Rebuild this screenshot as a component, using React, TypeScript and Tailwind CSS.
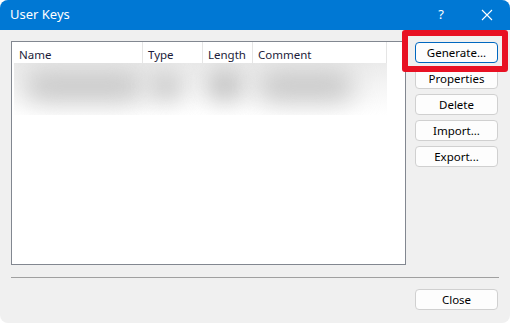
import React from "react";

const columns = [
  { label: "Name", width: 129 },
  { label: "Type", width: 60 },
  { label: "Length", width: 50 },
  { label: "Comment", width: 134 },
];

const buttons = ["Generate...", "Properties", "Delete", "Import...", "Export..."];

function DialogButton({ label, primary }: { label: string; primary?: boolean }) {
  return (
    <button
      className={
        "w-[83px] h-[21px] rounded-[4px] bg-[#fdfdfd] text-[11.5px] leading-none text-black border " +
        (primary ? "border-[#0067c0]" : "border-[#d0d0d0]")
      }
    >
      {label}
    </button>
  );
}

export default function App() {
  return (
    <div
      className="relative w-[510px] h-[323px] bg-white overflow-hidden"
      style={{ fontFamily: '"Noto Sans", "Liberation Sans", sans-serif' }}
    >
      <div className="flex flex-col w-full h-full rounded-[8px] overflow-hidden bg-[#f0f0f0]">
        {/* title bar */}
        <div className="h-[30px] bg-[#0078d4] flex items-center text-white shrink-0">
          <span className="pl-[10px] text-[13px]">User Keys</span>
          <span className="ml-auto mr-[37px] text-[13px]">?</span>
          <svg width="12" height="12" viewBox="0 0 12 12" className="mr-[17px]">
            <path d="M1 1 L11 11 M11 1 L1 11" stroke="white" strokeWidth="1.1" />
          </svg>
        </div>

        {/* body */}
        <div className="flex pt-[11px] pl-[11px]">
          <div className="w-[395px] h-[224px] border border-[#828790] bg-white">
            <div className="flex h-[21px] ml-[2px]">
              {columns.map((c) => (
                <div
                  key={c.label}
                  className="h-full border-r border-[#e5e5e5] text-[11.5px] leading-[16px] text-[#1c1c3a] flex items-end pl-[5px]"
                  style={{ width: c.width }}
                >
                  {c.label}
                </div>
              ))}
            </div>
            {/* blurred row */}
            <div className="relative ml-[2px] w-[373px] h-[52px] bg-gradient-to-b from-[#ebebeb] via-[#f6f6f6] to-white overflow-hidden">
              <div className="absolute left-[10px] top-[8px] w-[120px] h-[30px] rounded-full bg-[#c6c6c6] blur-[13px]" />
              <div className="absolute left-[134px] top-[8px] w-[36px] h-[30px] rounded-full bg-[#cccccc] blur-[11px]" />
              <div className="absolute left-[192px] top-[6px] w-[38px] h-[32px] rounded-full bg-[#c4c4c4] blur-[11px]" />
              <div className="absolute left-[243px] top-[8px] w-[97px] h-[30px] rounded-full bg-[#c6c6c6] blur-[13px]" />
            </div>
          </div>
          <div className="flex flex-col gap-[5px] pt-[1px] ml-[9px]">
            {buttons.map((b, i) => (
              <DialogButton key={b} label={b} primary={i === 0} />
            ))}
          </div>
        </div>

        <div className="mx-[11px] mt-[12px] h-px bg-[#a0a0a0]" />

        <div className="flex justify-end pr-[12px] mt-[11px]">
          <DialogButton label="Close" />
        </div>
      </div>

      {/* highlight */}
      <div className="absolute left-[402px] top-[30px] w-[106px] h-[42px] border-[6px] border-[#e81123] rounded-[3px]" />
    </div>
  );
}
